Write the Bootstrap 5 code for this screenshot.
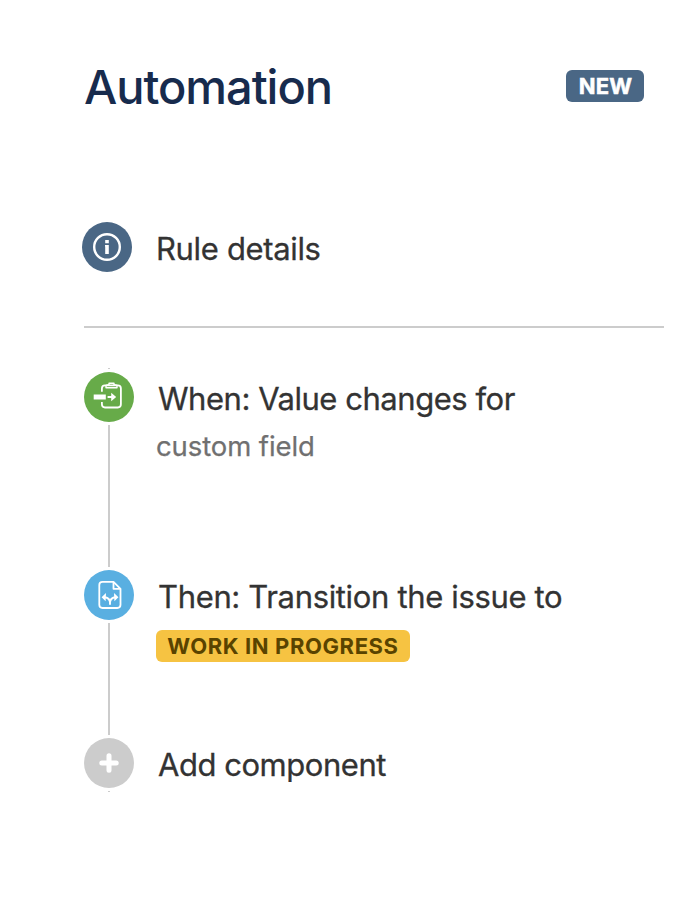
<!DOCTYPE html>
<html lang="en">
<head>
<meta charset="utf-8">
<meta name="viewport" content="width=device-width, initial-scale=1">
<title>Automation</title>
<link href="https://cdn.jsdelivr.net/npm/bootstrap@5.3.0/dist/css/bootstrap.min.css" rel="stylesheet">
<style>
body{font-family:Inter,"Liberation Sans",sans-serif;color:#333;background:#fff}
.panel{width:684px;height:900px;padding:0 20px 0 84px;overflow:hidden}
.panel-head{padding:58px 20px 0 0;height:222px}
.panel-title{font-size:47px;line-height:58px;font-weight:500;letter-spacing:-1.05px;color:#172b4d}
.lozenge{height:32px;border-radius:6px;font-size:22px;line-height:32px;font-weight:700;padding:0;white-space:nowrap}
.lozenge-new{background:#4a6785;color:#fff;width:78px;margin-top:12px;padding-left:1px;letter-spacing:.1px;-webkit-text-stroke:.5px #fff}
.lozenge-progress{background:#f6c342;color:#594300;width:254px;letter-spacing:.6px}
.details{margin-left:-2px;height:104px}
.step-label{font-size:31px;line-height:50px;letter-spacing:-.46px;white-space:nowrap;padding-top:2px;-webkit-text-stroke:.3px #333}
.label-wide{letter-spacing:-.34px}
.disc{width:50px;height:50px;flex:none;display:block}
.divider{height:2px;background:#ccc}
.rule-flow{padding-top:40px}
.rail{width:50px;flex:none;gap:3px}
.stem{width:2px;background:#ccc}
.stem-cap{height:1px}
.rule-step{margin-left:24px}
.step-sub{margin-left:-2px}
.step-note{font-size:27.5px;line-height:34px;letter-spacing:-.1px;color:#707070;padding-top:5px;-webkit-text-stroke:.25px #707070}
</style>
<script src="https://cdn.jsdelivr.net/npm/bootstrap@5.3.0/dist/js/bootstrap.bundle.min.js"></script>
</head>
<body>
<main class="panel">
  <header class="panel-head d-flex justify-content-between align-items-start">
    <h1 class="panel-title m-0">Automation</h1>
    <span class="lozenge lozenge-new text-center">NEW</span>
  </header>

  <div class="details d-flex align-items-start">
    <svg class="disc" viewBox="0 0 50 50" aria-hidden="true">
      <circle cx="25" cy="25" r="25" fill="#4a6785"/>
      <circle cx="25" cy="25" r="12.8" fill="none" stroke="#fff" stroke-width="2.4"/>
      <path d="M23.2 18h3.6v3.2h-3.6zM23 23h3.8v9h-3.6v-7.6h-.2z" fill="#fff"/>
    </svg>
    <span class="step-label label-wide rule-step">Rule details</span>
  </div>

  <div class="divider"></div>

  <section class="rule-flow d-flex">
    <div class="rail d-flex flex-column align-items-center">
      <span class="stem stem-cap"></span>
      <svg class="disc" viewBox="0 0 50 50" aria-hidden="true">
        <circle cx="25" cy="25" r="25" fill="#67ab49"/>
        <g fill="none" stroke="#fff" stroke-width="1.8" stroke-linejoin="round">
          <path d="M17.9 19.8V16.5Q17.9 13.3 21 13.3H33.8Q36.9 13.3 36.9 16.5V32.3Q36.9 35.5 33.8 35.5H21Q17.9 35.5 17.9 32.3V30"/>
          <path d="M22 15.7H33V14Q33 12.9 31.8 12.9H30V11.2H25V12.9H23.2Q22 12.9 22 14z" stroke-width="1.4"/>
        </g>
        <path d="M9.7 22.4H21.8V27.4H9.7zM23.6 24H27.2V20.7L32.2 25L27.2 29.2V26H23.6z" fill="#fff"/>
      </svg>
      <span class="stem" style="height:142px"></span>
      <svg class="disc" viewBox="0 0 50 50" aria-hidden="true">
        <circle cx="25" cy="25" r="25" fill="#59afe1"/>
        <g fill="none" stroke="#fff" stroke-width="1.8" stroke-linejoin="round">
          <path d="M29.5 11.9H18.5Q15.3 11.9 15.3 15.1V34.8Q15.3 38 18.5 38H33.3Q36.5 38 36.5 34.8V18.8z"/>
          <path d="M29.5 11.9V18.8H36.5"/>
          <path d="M26 34.7V32.3Q25.8 28.2 21 27.2M26 32.3Q26.2 28.2 31 27.2" stroke-width="1.9"/>
        </g>
        <path d="M22 23.1L17.6 27.2L21.6 31.3zM30 23.1L34.4 27.2L30.4 31.3z" fill="#fff"/>
      </svg>
      <span class="stem" style="height:112px"></span>
      <svg class="disc" viewBox="0 0 50 50" aria-hidden="true">
        <circle cx="25" cy="25" r="25" fill="#ccc"/>
        <path d="M25 17.8V32.2M17.8 25H32.2" stroke="#fff" stroke-width="5" stroke-linecap="round"/>
      </svg>
      <span class="stem stem-cap"></span>
    </div>

    <div class="rule-step d-flex flex-column pt-1">
      <div style="height:198px">
        <div class="step-label">When: Value changes for</div>
        <div class="step-sub step-note">custom field</div>
      </div>
      <div style="height:168px">
        <div class="step-label label-wide">Then: Transition the issue to</div>
        <div class="step-sub d-flex pt-2"><span class="lozenge lozenge-progress text-center">WORK IN PROGRESS</span></div>
      </div>
      <div class="step-label">Add component</div>
    </div>
  </section>
</main>
</body>
</html>
